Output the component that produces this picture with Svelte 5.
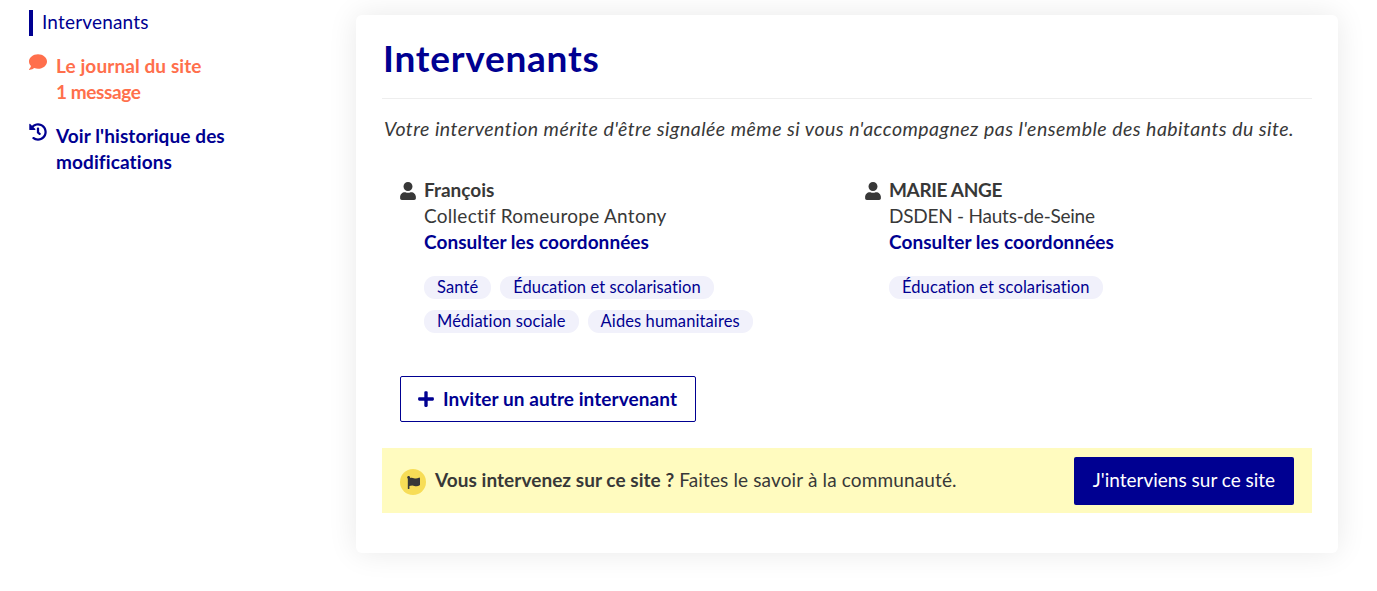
<script>
  const people = [
    {
      name: 'François',
      org: 'Collectif Romeurope Antony',
      tags: ['Santé', 'Éducation et scolarisation', 'Médiation sociale', 'Aides humanitaires']
    },
    {
      name: 'MARIE ANGE',
      org: 'DSDEN - Hauts-de-Seine',
      caps: true,
      tags: ['Éducation et scolarisation']
    }
  ];
</script>

<div class="page">
  <nav class="sidebar">
    <a class="current" href="#intervenants">Intervenants</a>
    <a class="entry journal" href="#journal">
      <svg viewBox="0 0 512 512" width="18" height="18" aria-hidden="true">
        <path d="M256 32C114.600 32 0 125.100 0 240c0 49.600 21.400 95 57 130.700C44.500 421.100 2.700 466 2.200 466.500c-2.200 2.300-2.800 5.700-1.500 8.700S4.800 480 8 480c66.300 0 116-31.800 140.600-51.400 32.700 12.300 69 19.400 107.400 19.400 141.400 0 256-93.100 256-208S397.400 32 256 32z" />
      </svg>
      <span>Le journal du site<br /><span class="count">1 message</span></span>
    </a>
    <a class="entry history" href="#historique">
      <svg viewBox="0 0 512 512" width="18" height="18" aria-hidden="true">
        <path d="M504 255.531c.253 136.640-111.180 248.372-247.820 248.468-59.015.042-113.223-20.530-155.822-54.911-11.077-8.940-11.905-25.541-1.839-35.607l11.267-11.267c8.609-8.609 22.353-9.551 31.891-1.984C173.062 425.135 212.781 440 256 440c101.705 0 184-82.311 184-184 0-101.705-82.311-184-184-184-48.814 0-93.149 18.969-126.068 49.932l50.754 50.754c10.080 10.080 2.941 27.314-11.313 27.314H24c-8.837 0-16-7.163-16-16V38.627c0-14.254 17.234-21.393 27.314-11.314l49.372 49.372C129.209 34.136 189.552 8 256 8c136.810 0 247.747 110.780 248 247.531zm-180.912 78.784l9.823-12.630c8.138-10.463 6.253-25.542-4.210-33.679L288 256.349V152c0-13.255-10.745-24-24-24h-16c-13.255 0-24 10.745-24 24v135.651l65.409 50.874c10.463 8.137 25.541 6.253 33.679-4.210z" />
      </svg>
      <span>Voir l'historique des<br />modifications</span>
    </a>
  </nav>

  <main class="card">
    <h1>Intervenants</h1>
    <p class="intro">Votre intervention mérite d'être signalée même si vous n'accompagnez pas l'ensemble des habitants du site.</p>

    <div class="people">
      {#each people as person}
        <section class="person">
          <svg viewBox="0 0 448 512" width="16" height="18" aria-hidden="true">
            <path d="M224 256c70.700 0 128-57.300 128-128S294.700 0 224 0 96 57.300 96 128s57.300 128 128 128zm89.600 32h-16.700c-22.200 10.200-46.900 16-72.900 16s-50.600-5.800-72.900-16h-16.700C60.200 288 0 348.200 0 422.400V464c0 26.500 21.500 48 48 48h352c26.500 0 48-21.500 48-48v-41.600c0-74.200-60.200-134.400-134.400-134.400z" />
          </svg>
          <div class="details">
            <div class="name" class:caps={person.caps}>{person.name}</div>
            <div class="org" class:caps={person.caps}>{person.org}</div>
            <a class="contact" href="#coordonnees">Consulter les coordonnées</a>
            <div class="tags">
              {#each person.tags as tag}<span class="tag">{tag}</span>{/each}
            </div>
          </div>
        </section>
      {/each}
    </div>

    <button class="invite">
      <svg viewBox="0 0 448 512" width="16" height="18" aria-hidden="true">
        <path d="M416 208H272V64c0-17.670-14.330-32-32-32h-32c-17.670 0-32 14.330-32 32v144H32c-17.670 0-32 14.330-32 32v32c0 17.670 14.330 32 32 32h144v144c0 17.670 14.330 32 32 32h32c17.670 0 32-14.330 32-32V304h144c17.670 0 32-14.330 32-32v-32c0-17.670-14.330-32-32-32z" />
      </svg>
      <span>Inviter un autre intervenant</span>
    </button>

    <div class="banner">
      <span class="flag">
        <svg viewBox="0 0 512 512" width="13" height="13" aria-hidden="true">
          <path d="M349.565 98.783C295.978 98.783 251.721 64 184.348 64c-24.955 0-47.309 4.384-68.045 12.013a55.947 55.947 0 0 0 3.586-23.562C118.117 24.015 94.806 1.206 66.338.048 34.345-1.254 8 24.296 8 56c0 19.026 9.497 35.825 24 45.945V488c0 13.255 10.745 24 24 24h16c13.255 0 24-10.745 24-24v-94.400c28.311-12.064 63.582-22.122 114.435-22.122 53.588 0 97.844 34.783 165.217 34.783 48.169 0 86.667-16.294 122.505-40.858C506.840 359.452 512 349.571 512 339.045v-243.100c0-23.393-24.269-38.870-45.485-29.016-34.338 15.948-76.454 31.854-116.950 31.854z" />
        </svg>
      </span>
      <p><strong>Vous intervenez sur ce site ?</strong> <span>Faites le savoir à la communauté.</span></p>
      <button class="join">J'interviens sur ce site</button>
    </div>
  </main>
</div>

<style>
  :global(body) {
    margin: 0;
    background: #fff;
  }
  .page {
    box-sizing: border-box;
    height: 591px;
    overflow: hidden;
    display: flex;
    font-family: Lato, 'Noto Sans', sans-serif;
    font-size: 19px;
    line-height: 26px;
    color: #383838;
    font-variant-ligatures: none;
  }
  svg {
    display: block;
    flex: none;
    fill: currentColor;
  }
  a {
    color: #000091;
    text-decoration: none;
  }
  .sidebar {
    box-sizing: border-box;
    width: 356px;
    flex: none;
    padding: 10px 0 0 29px;
  }
  .current {
    display: block;
    height: 26px;
    padding-left: 9px;
    border-left: 4px solid #000091;
    line-height: 24px;
    letter-spacing: 0.18px;
  }
  .entry {
    display: flex;
    gap: 9px;
    font-weight: 700;
    letter-spacing: 0.1px;
  }
  .journal {
    margin-top: 17px;
    color: #ff6f4c;
  }
  .count {
    letter-spacing: -0.4px;
  }
  .history {
    margin-top: 18px;
  }
  .card {
    box-sizing: border-box;
    width: 982px;
    height: 538px;
    margin-top: 15px;
    padding: 0 26px;
    border-radius: 6px;
    background: #fff;
    box-shadow: 0 0 30px rgba(0, 0, 0, 0.09);
  }
  h1 {
    box-sizing: border-box;
    height: 84px;
    margin: 0;
    padding: 19px 0 0 1px;
    border-bottom: 1px solid #eee;
    color: #000091;
    font-size: 37px;
    line-height: 48px;
    font-weight: 700;
    letter-spacing: 0.75px;
  }
  .intro {
    margin: 17px 0 0 2px;
    font-size: 19.5px;
    font-style: italic;
    letter-spacing: 0.48px;
    white-space: nowrap;
  }
  .people {
    display: grid;
    grid-template-columns: 465px 1fr;
    margin: 35px 0 0 18px;
  }
  .person {
    display: flex;
    gap: 8px;
  }
  .person svg {
    margin-top: 5px;
  }
  .details {
    width: 350px;
  }
  .name,
  .contact {
    font-weight: 700;
  }
  .name.caps {
    letter-spacing: -0.35px;
  }
  .org {
    letter-spacing: 0.28px;
  }
  .org.caps {
    letter-spacing: -0.24px;
  }
  .contact {
    display: block;
    letter-spacing: 0.06px;
  }
  .tags {
    display: flex;
    flex-wrap: wrap;
    gap: 11px 9px;
    margin-top: 21px;
  }
  .tag {
    padding: 0 13px;
    border-radius: 11px;
    background: #f1f1fb;
    color: #000091;
    font-size: 16.5px;
    line-height: 23px;
    letter-spacing: 0.1px;
  }
  button {
    box-sizing: border-box;
    font-family: inherit;
    font-size: 19px;
    line-height: 26px;
    border-radius: 2px;
    white-space: nowrap;
  }
  .invite {
    display: flex;
    align-items: center;
    gap: 9px;
    width: 296px;
    height: 46px;
    margin: 43px 0 0 18px;
    padding: 0 0 0 17px;
    border: 1px solid #000091;
    background: #fff;
    color: #000091;
    font-weight: 700;
    letter-spacing: 0.08px;
  }
  .banner {
    display: flex;
    align-items: center;
    height: 65px;
    margin-top: 26px;
    padding: 0 18px;
    box-sizing: border-box;
    background: #fffbbf;
  }
  .flag {
    display: grid;
    place-items: center;
    width: 26px;
    height: 26px;
    margin: 3px 9px 0 0;
    border-radius: 50%;
    background: #f7dd57;
  }
  .banner p {
    flex: 1;
    margin: 0;
    padding-bottom: 2px;
    white-space: nowrap;
    letter-spacing: 0.05px;
  }
  .banner p span {
    letter-spacing: 0.14px;
  }
  .join {
    width: 220px;
    height: 48px;
    padding: 0 0 2px;
    border: 0;
    background: #000091;
    color: #fff;
  }
</style>
